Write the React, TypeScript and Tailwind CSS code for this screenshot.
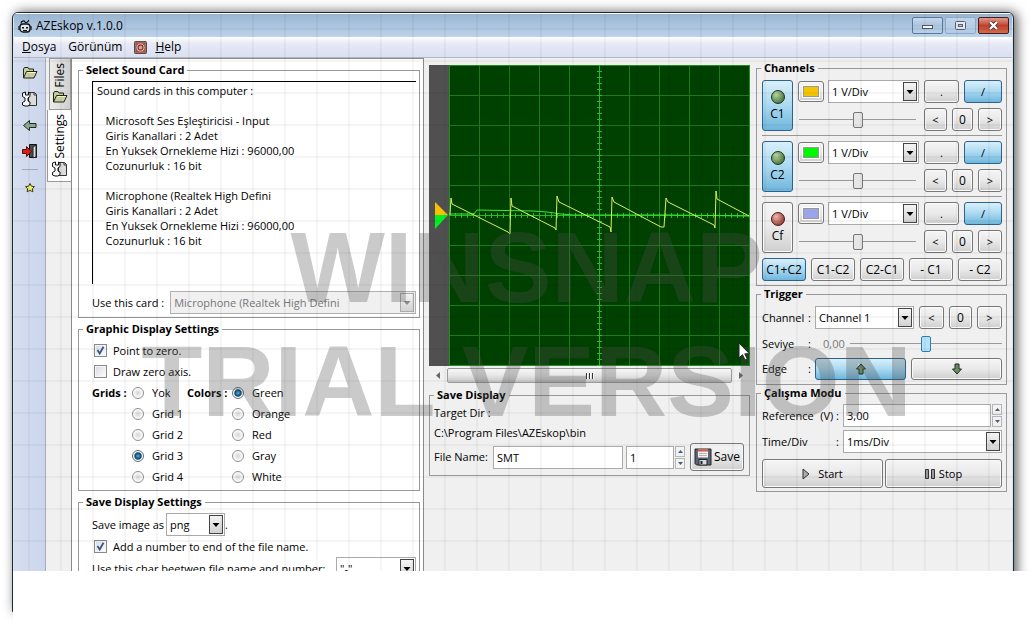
import clsx from "clsx";
import type { ReactNode } from "react";

const soundCards = `Sound cards in this computer :

   Microsoft Ses Eşleştiricisi - Input
   Giris Kanallari : 2 Adet
   En Yuksek Ornekleme Hizi : 96000,00
   Cozunurluk : 16 bit

   Microphone (Realtek High Defini
   Giris Kanallari : 2 Adet
   En Yuksek Ornekleme Hizi : 96000,00
   Cozunurluk : 16 bit`;

const channels = [
  { name: "C1", swatch: "bg-[#f5c400]", on: true },
  { name: "C2", swatch: "bg-[#00f800]", on: true },
  { name: "Cf", swatch: "bg-[#9ba5ea]", on: false },
];

const mathModes = ["C1+C2", "C1-C2", "C2-C1", "- C1", "- C2"];
const grids = ["Yok", "Grid 1", "Grid 2", "Grid 3", "Grid 4"];
const colors = ["Green", "Orange", "Red", "Gray", "White"];

const FolderIcon = () => (
  <svg className="size-4" viewBox="0 0 16 16" aria-hidden="true">
    <path
      d="M1.5 13V4l1-1.5h3.500l1 1.500h4.500V6M1.500 13l3-6.500h10.500l-3 6.500z"
      fill="#c9cf9c"
      stroke="#22261a"
      strokeLinejoin="round"
    />
    <path d="M5.500 7.500h8" stroke="#f3f6d8" />
  </svg>
);

const SetupIcon = () => (
  <svg className="size-4" viewBox="0 0 16 16" aria-hidden="true">
    <path d="M6.500 1.500h6l2 2v11h-8z" fill="#dcdcdc" stroke="#333" />
    <path d="M12 1.500V4h2.500" fill="none" stroke="#333" />
    <path
      d="M.5 2v3.500L3 7v3L.5 11.500V14L3 15h3l2-1.500V11L6 10V7l2-1.500V2L6.500 1v3h-3V1z"
      fill="#f6f6f6"
      stroke="#111"
      strokeLinejoin="round"
    />
  </svg>
);

const BackIcon = () => (
  <svg className="size-4" viewBox="0 0 16 16" aria-hidden="true">
    <path
      d="M1.500 8.500l6-5v3h6.500v4H7.500v3z"
      fill="#8fae94"
      stroke="#1f2b21"
      strokeLinejoin="round"
    />
  </svg>
);

const ExitIcon = () => (
  <svg className="size-4" viewBox="0 0 16 16" aria-hidden="true">
    <path d="M7.500 1.500h7v13h-7z" fill="#4a4a4a" stroke="#111" />
    <path d="M11 4l3-2v12l-3 1z" fill="#d8d8d8" stroke="#222" />
    <path
      d="M.5 6.500h4v-3l5 5-5 5v-3h-4z"
      fill="#d8201a"
      stroke="#5c0d0a"
      strokeLinejoin="round"
    />
  </svg>
);

const StarIcon = () => (
  <svg className="size-4" viewBox="0 0 16 16" aria-hidden="true">
    <path
      d="M8 3.500l1.400 2.700 3.100.4-2.200 2.100.6 3.100L8 10.400l-2.900 1.400.6-3.100-2.200-2.100 3.100-.4z"
      fill="#f3f36a"
      stroke="#3c3c14"
      strokeLinejoin="round"
    />
  </svg>
);

const AppIcon = () => (
  <svg className="size-3.5" viewBox="0 0 14 14" aria-hidden="true">
    <rect x="2" y="5" width="10" height="8" rx="3" fill="#dfe8f1" stroke="#111" strokeWidth="1.300" />
    <path d="M3 4.500C3 2 6 1 7 3s4-1 3.500-2M1 7v4M13 7v4" fill="none" stroke="#111" strokeWidth="1.200" />
    <path d="M4 8h2v1.500H4zM8 8h2v1.500H8zM5 11h4v1H5z" fill="#111" />
  </svg>
);

const HelpIcon = () => (
  <svg className="size-[13px]" viewBox="0 0 14 14" aria-hidden="true">
    <rect x=".5" y=".5" width="13" height="13" rx="1" fill="#8d7a73" stroke="#4b3f3b" />
    <circle cx="7" cy="7" r="4.800" fill="#f1e4e0" stroke="#a4443a" />
    <circle cx="7" cy="7" r="2.700" fill="#b9aeb0" stroke="#9c3226" strokeWidth="1.400" />
    <path d="M2 2l2 2M12 2l-2 2M2 12l2-2M12 12l-2-2" stroke="#c8402e" strokeWidth="1.800" />
  </svg>
);

const EdgeIcon = ({ down }: { down?: boolean }) => (
  <svg className={clsx("size-3", down && "rotate-180")} viewBox="0 0 12 12" aria-hidden="true">
    <path
      d="M6 1l4.500 5H8v5H4V6H1.500z"
      fill="#6f8f66"
      stroke="#1c2a1a"
      strokeLinejoin="round"
    />
  </svg>
);

const FloppyIcon = () => (
  <svg className="size-[18px]" viewBox="0 0 18 18" aria-hidden="true">
    <path d="M1 1h16v16H2.500L1 15.500z" fill="#5b6470" stroke="#23272d" />
    <path d="M4 1.500h10v8H4z" fill="#f2f2f2" />
    <path d="M4 1.500h10v2H4z" fill="#d8573c" />
    <path d="M5 5.500h8M5 7.500h8" stroke="#b5b5b5" />
    <path d="M5 11.500h8V17H5z" fill="#d5d8dc" stroke="#23272d" />
    <path d="M6.500 13h2v3h-2z" fill="#23272d" />
  </svg>
);

type ButtonProps = {
  children: ReactNode;
  pressed?: boolean;
  className?: string;
  label?: string;
};

const Button = ({ children, pressed, className, label }: ButtonProps) => (
  <button
    type="button"
    aria-label={label}
    aria-pressed={pressed}
    className={clsx(
      "flex items-center justify-center rounded-[3px] border bg-linear-to-b",
      pressed
        ? "border-[#2c628b] from-[#d9effa] from-0% via-[#a9d9f1] via-50% to-[#6fb6dc]"
        : "border-[#777] from-[#f5f5f5] via-[#e9e9e9] via-50% to-[#cfcfcf] shadow-[inset_0_0_0_1px_#fafafa]",
      className,
    )}
  >
    {children}
  </button>
);

type GroupProps = {
  title: string;
  className?: string;
  bodyClassName?: string;
  children: ReactNode;
};

const Group = ({ title, className, bodyClassName, children }: GroupProps) => (
  <fieldset className={clsx("min-w-0 border border-[#999]", className)}>
    <legend className="ml-1 px-[3px] text-[11px] leading-4 font-bold">{title}</legend>
    <div className={bodyClassName}>{children}</div>
  </fieldset>
);

type SelectProps = {
  label: string;
  value: string;
  className?: string;
  disabled?: boolean;
};

const Select = ({ label, value, className, disabled }: SelectProps) => (
  <div className={clsx("relative h-[23px] min-w-0", className)}>
    <select
      aria-label={label}
      disabled={disabled}
      className={clsx(
        "block size-full appearance-none border pl-[3px]",
        disabled ? "border-[#b0b0b0] bg-[#f0f0f0] text-[#777]" : "border-[#aaa] bg-white",
      )}
    >
      <option>{value}</option>
    </select>
    <span
      className={clsx(
        "pointer-events-none absolute inset-y-0.5 right-0.5 flex w-3.5 items-center justify-center border bg-linear-to-b from-[#f4f4f4] to-[#d2d2d2]",
        disabled ? "border-[#aaa] text-[#888]" : "border-[#444] text-black",
      )}
    >
      <svg className="h-1 w-2" viewBox="0 0 8 4" aria-hidden="true">
        <path d="M.5 0h7L4 4z" fill="currentColor" />
      </svg>
    </span>
  </div>
);

const Slider = ({ label, hot, className }: { label: string; hot?: boolean; className?: string }) => (
  <input
    type="range"
    aria-label={label}
    defaultValue={50}
    className={clsx(
      "h-4 min-w-0 appearance-none bg-transparent bg-linear-to-b from-[#999] to-[#999] bg-[length:100%_1px] bg-center bg-no-repeat [&::-webkit-slider-thumb]:h-4 [&::-webkit-slider-thumb]:w-2.5 [&::-webkit-slider-thumb]:appearance-none [&::-webkit-slider-thumb]:rounded-[2px] [&::-webkit-slider-thumb]:border",
      hot
        ? "[&::-webkit-slider-thumb]:border-[#2c7fae] [&::-webkit-slider-thumb]:bg-[#b5e2f8]"
        : "[&::-webkit-slider-thumb]:border-[#777] [&::-webkit-slider-thumb]:bg-[#e6e6e6]",
      className,
    )}
  />
);

const Spinner = () => (
  <div className="ml-px flex w-2.5 flex-col gap-px">
    {["Increase", "Decrease"].map((name, i) => (
      <button
        key={name}
        type="button"
        aria-label={name}
        className="flex h-[11px] items-center justify-center border border-[#b5b5b5] bg-[#f2f2f2]"
      >
        <svg className={clsx("h-[3px] w-[5px]", i === 1 && "rotate-180")} viewBox="0 0 5 3" aria-hidden="true">
          <path d="M0 3h5L2.500 0z" fill="#4a5a78" />
        </svg>
      </button>
    ))}
  </div>
);

const CheckBox = ({ label, checked }: { label: string; checked?: boolean }) => (
  <label className="ml-0.5 flex h-[21px] items-center gap-1.5">
    <span className="relative size-[13px]">
      <input
        type="checkbox"
        defaultChecked={checked}
        className="peer block size-full appearance-none border border-[#8a8a8a] bg-linear-to-br from-[#d5d9df] to-white shadow-[inset_0_0_0_1px_#f4f4f4]"
      />
      <svg
        className="pointer-events-none absolute inset-0 hidden peer-checked:block"
        viewBox="0 0 13 13"
        aria-hidden="true"
      >
        <path d="M3.500 6l2.200 3.500L9.500 2.800" fill="none" stroke="#3b5488" strokeWidth="1.800" />
      </svg>
    </span>
    {label}
  </label>
);

const RadioList = ({ name, options, selected }: { name: string; options: string[]; selected: string }) => (
  <div>
    {options.map((option) => (
      <label key={option} className="flex h-[21px] items-center gap-2">
        <input
          type="radio"
          name={name}
          defaultChecked={option === selected}
          className="size-3 appearance-none rounded-full border border-[#8e8f8f] bg-radial from-[#d4d4d4] to-white to-70% checked:border-[#5a7183] checked:from-[#37a0d0] checked:from-10% checked:via-[#103d62] checked:via-45% checked:to-white checked:to-60%"
        />
        {option}
      </label>
    ))}
  </div>
);

const TitleBar = () => (
  <header className="flex h-6 items-center gap-1 border-t border-white bg-linear-to-b from-[#9ab5d2] to-[#bcd3eb] pr-[3px] pl-1">
    <AppIcon />
    <h1 className="grow text-[12px]">AZEskop v.1.0.0</h1>
    <div className="flex gap-0.5">
      <button
        type="button"
        aria-label="Minimize"
        className="flex h-[17px] w-[31px] items-center justify-center rounded-[2px] border border-[#5b7796] bg-linear-to-b from-[#c7d9ec] via-[#a9c3de] via-50% to-[#b9d1ea]"
      >
        <svg className="h-1.5 w-3" viewBox="0 0 12 6" aria-hidden="true">
          <rect x=".5" y="2.500" width="10" height="3" fill="#fff" stroke="#4c5763" />
        </svg>
      </button>
      <button
        type="button"
        aria-label="Maximize"
        className="flex h-[17px] w-[31px] items-center justify-center rounded-[2px] border border-[#8fa9c6] bg-linear-to-b from-[#bfd3e9] to-[#b2cbe5]"
      >
        <svg className="h-[9px] w-[11px]" viewBox="0 0 11 9" aria-hidden="true">
          <rect x=".5" y=".5" width="10" height="8" rx="1" fill="#e4ebf3" stroke="#56616d" />
          <rect x="3.500" y="3.500" width="4" height="2" fill="#b5c8dc" stroke="#56616d" />
        </svg>
      </button>
      <button
        type="button"
        aria-label="Close"
        className="flex h-[17px] w-[31px] items-center justify-center rounded-[2px] border border-[#4a1a16] bg-linear-to-b from-[#dd9a8c] via-[#c0402c] via-50% to-[#d36a4e]"
      >
        <svg className="h-[9px] w-[11px]" viewBox="0 0 11 9" aria-hidden="true">
          <path d="M2 1l7 7M9 1L2 8" stroke="#5b3a3a" strokeWidth="4" />
          <path d="M2 1l7 7M9 1L2 8" stroke="#fff" strokeWidth="2.200" />
        </svg>
      </button>
    </div>
  </header>
);

const MenuBar = () => (
  <nav className="flex h-[21px] items-center border-b border-[#b4b8c4] bg-linear-to-b from-white via-[#e6e9f5] via-35% to-[#dbe0f1] pl-2 text-[12px]">
    <button type="button">
      <u className="underline-offset-1">D</u>osya
    </button>
    <button type="button" className="ml-3">
      Görünüm
    </button>
    <button type="button" className="ml-3 flex items-center gap-2">
      <HelpIcon />
      <span>
        <u className="underline-offset-1">H</u>elp
      </span>
    </button>
  </nav>
);

const ToolBar = () => (
  <div className="flex w-[31px] shrink-0 flex-col items-center gap-2.5 bg-linear-to-r from-[#d6def0] to-[#cbd6ec] pt-[7px] pl-px">
    {[
      { name: "Open", icon: <FolderIcon /> },
      { name: "Setup", icon: <SetupIcon /> },
      { name: "Back", icon: <BackIcon /> },
      { name: "Exit", icon: <ExitIcon /> },
    ].map(({ name, icon }) => (
      <button key={name} type="button" aria-label={name}>
        {icon}
      </button>
    ))}
    <hr className="w-4 border-[#a3a9b6]" />
    <button type="button" aria-label="Favourite">
      <StarIcon />
    </button>
  </div>
);

const SideTabs = () => (
  <div className="flex w-[26px] shrink-0 flex-col items-end border-l border-[#a5adbd] bg-[#f0f0f0] text-[12px]">
    <button
      type="button"
      className="flex h-[52px] w-[22px] flex-col items-center justify-between border border-[#999] bg-linear-to-r from-[#ececec] to-[#cfcfcf] py-1"
    >
      <span className="rotate-180 leading-4 [writing-mode:vertical-rl]">Files</span>
      <FolderIcon />
    </button>
    <button
      type="button"
      className="flex h-[72px] w-6 flex-col items-center justify-between border-b border-l border-[#999] bg-white py-1"
    >
      <span className="rotate-180 leading-4 [writing-mode:vertical-rl]">Settings</span>
      <SetupIcon />
    </button>
  </div>
);

const SettingsPanel = () => (
  <section className="flex w-[353px] shrink-0 flex-col gap-[3px] overflow-hidden border-x border-t border-[#8a8a8a] bg-white pt-[3px] pr-[3px] pl-1.5">
    <Group title="Select Sound Card" bodyClassName="pt-[3px] pr-[3px] pb-[3px] pl-[13px]">
      <pre className="h-[203px] border-t border-l border-black pt-px pl-1 font-[inherit] leading-[15px]">
        {soundCards}
      </pre>
      <div className="mt-[7px] flex items-center gap-1.5">
        <span>Use this card :</span>
        <Select label="Use this card" value="Microphone (Realtek High Defini" className="grow" disabled />
      </div>
    </Group>
    <Group title="Graphic Display Settings" bodyClassName="py-[3px] pl-[13px]">
      <CheckBox label="Point to zero." checked />
      <CheckBox label="Draw zero axis." />
      <div className="flex">
        <b className="w-10 leading-[21px]">Grids :</b>
        <div className="w-[55px]">
          <RadioList name="grid" options={grids} selected="Grid 3" />
        </div>
        <b className="w-[45px] leading-[21px]">Colors :</b>
        <RadioList name="color" options={colors} selected="Green" />
      </div>
    </Group>
    <Group title="Save Display Settings" bodyClassName="py-[3px] pr-[3px] pl-[13px]">
      <div className="flex items-center">
        <span className="w-[74px] whitespace-nowrap">Save image as</span>
        <Select label="Save image as" value="png" className="w-[59px]" />
        <span>.</span>
      </div>
      <CheckBox label="Add a number to end of the file name." checked />
      <div className="flex items-center justify-between">
        <span>Use this char beetwen file name and number:</span>
        <Select label="Separator" value={'"-"'} className="w-20" />
      </div>
    </Group>
  </section>
);

const range = (count: number) => Array.from({ length: count }, (_, i) => i);

const Scope = () => (
  <div className="relative">
    <svg className="block h-[301px] w-full" viewBox="0 0 321 301" preserveAspectRatio="none" role="img" aria-label="Scope">
      <rect width="321" height="301" fill="#004000" />
      <rect width="20" height="301" fill="#505050" />
      <g stroke="#1b7a1b">
        {range(9).map((i) => (
          <path key={i} d={`M${50.5 + i * 30} 0v301`} />
        ))}
        {range(9).map((i) => (
          <path key={i} d={`M20 ${30.5 + i * 30}h301`} />
        ))}
      </g>
      <path d="M20.500 0v301M320.500 0v301M20 .5h301M20 300.500h301" stroke="#1f8f1f" />
      <g stroke="#2cb82c">
        <path d="M170.500 0v301M20 150.500h301" />
        {range(50).map((i) => (
          <path key={i} d={`M168 ${6.5 + i * 6}h5`} />
        ))}
        {range(50).map((i) => (
          <path key={i} d={`M${26.5 + i * 6} 148v5`} />
        ))}
      </g>
      <polyline
        points="20,149 45,149 48,145 104,146 118,147 132,149 144,150 240,150 320,151"
        fill="none"
        stroke="#35e835"
      />
      <polyline
        points="21,150 22,133 23,139 79,167 81,169 82,133 83,141 126,163 127,165 128,131 130,137 181,162 182,167 183,132 185,137 232,162 235,162 237,133 239,137 285,160 286,163 287,126 288,134 320,151"
        fill="none"
        stroke="#d9f060"
      />
      <path d="M6 137l13 13H6z" fill="#f8c000" />
      <path d="M6 150h13L6 164z" fill="#00f020" />
    </svg>
    <svg className="absolute right-0 bottom-[5px] z-10 h-[19px] w-3" viewBox="0 0 12 19" aria-hidden="true">
      <path d="M1 1v15l3.500-3.300L7 18l2.300-1-2.500-5.200H11.500z" fill="#fff" stroke="#222" />
    </svg>
  </div>
);

const ScopeScroll = () => (
  <div className="mt-[2px] flex h-[15px] items-center">
    <button type="button" aria-label="Scroll left" className="flex w-[18px] justify-center">
      <svg className="h-[7px] w-1" viewBox="0 0 4 7" aria-hidden="true">
        <path d="M4 0v7L0 3.500z" fill="#666" />
      </svg>
    </button>
    <div className="flex h-[15px] grow items-center justify-center gap-px rounded-[2px] border border-[#999] bg-linear-to-b from-[#f6f6f6] via-[#e6e6e6] via-50% to-[#c6c6c6]">
      {range(3).map((i) => (
        <span key={i} className="h-1.5 w-0.5 border-l border-[#333] bg-white" />
      ))}
    </div>
    <button type="button" aria-label="Scroll right" className="flex w-[18px] justify-center">
      <svg className="h-[7px] w-1" viewBox="0 0 4 7" aria-hidden="true">
        <path d="M0 0v7l4-3.500z" fill="#666" />
      </svg>
    </button>
  </div>
);

const ScopePanel = () => (
  <main className="min-w-0 grow pt-[7px] pr-1.5 pl-[5px]">
    <Scope />
    <ScopeScroll />
    <Group title="Save Display" className="mt-1" bodyClassName="pr-[5px] pb-1 pl-1">
      <p className="leading-5">Target Dir :</p>
      <p className="leading-5">C:\Program Files\AZEskop\bin</p>
      <div className="flex items-center">
        <label htmlFor="file-name" className="w-[59px] whitespace-nowrap">
          File Name:
        </label>
        <input
          id="file-name"
          defaultValue="SMT"
          className="h-[23px] w-0 grow border border-[#aaa] bg-white px-[3px]"
        />
        <input
          aria-label="File number"
          defaultValue="1"
          className="ml-[3px] h-[23px] w-12 border border-[#aaa] bg-white px-[3px]"
        />
        <Spinner />
        <Button className="ml-[5px] h-7 w-[54px] gap-0.5 text-[12px]">
          <FloppyIcon />
          Save
        </Button>
      </div>
    </Group>
  </main>
);

const Channel = ({ name, swatch, on }: (typeof channels)[number]) => (
  <div className="mb-[5px] flex gap-[5px] border-b border-[#999] pb-1 last:border-b-0 last:pb-0">
    <Button pressed={on} className="w-[31px] shrink-0 flex-col gap-0.5 text-[12px] leading-4">
      <span
        className={clsx(
          "size-3.5 rounded-full border bg-radial-[at_35%_30%]",
          on ? "border-[#1c3517] from-[#b5d6a2] to-[#2c5a22]" : "border-[#4a1611] from-[#efb5a8] to-[#7a2018]",
        )}
      />
      {name}
    </Button>
    <div className="flex min-w-0 grow flex-col gap-[5px]">
      <div className="flex items-center gap-1">
        <Button label={`${name} color`} className="h-[21px] w-[26px] shrink-0">
          <span className={clsx("h-[11px] w-4 border border-[#999] shadow-[0_0_0_1px_#fff]", swatch)} />
        </Button>
        <Select label={`${name} scale`} value="1 V/Div" className="grow" />
      </div>
      <div className="flex h-[23px] items-center pr-[3px] pl-px">
        <Slider label={`${name} offset`} className="w-full" />
      </div>
    </div>
    <div className="flex w-[78px] shrink-0 flex-col gap-[5px]">
      <div className="flex h-[23px] gap-[5px]">
        <Button className="w-[35px]">.</Button>
        <Button pressed className="grow">
          /
        </Button>
      </div>
      <div className="flex h-[23px] gap-[5px]">
        <Button className="w-[23px]">&lt;</Button>
        <Button className="w-[21px] text-[12px]">0</Button>
        <Button className="grow">&gt;</Button>
      </div>
    </div>
  </div>
);

const ControlPanel = () => (
  <aside className="mr-[5px] w-[251px] shrink-0 pt-0.5">
    <Group title="Channels" bodyClassName="pt-1 pr-1 pb-1 pl-[5px]">
      <div>
        {channels.map((channel) => (
          <Channel key={channel.name} {...channel} />
        ))}
      </div>
      <div className="flex h-[23px] gap-[5px] text-[12px]">
        {mathModes.map((mode, i) => (
          <Button key={mode} pressed={i === 0 || undefined} className="flex-1 whitespace-nowrap">
            {mode}
          </Button>
        ))}
      </div>
    </Group>
    <Group title="Trigger" bodyClassName="pt-1 pr-1 pb-1 pl-[5px]">
      <div className="flex h-[23px] gap-[5px]">
        <span className="-mr-[5px] flex w-[53px] items-center justify-between pr-1">
          <span>Channel</span>:
        </span>
        <Select label="Trigger channel" value="Channel 1" className="grow" />
        <Button className="w-[25px]">&lt;</Button>
        <Button className="w-[23px] text-[12px]">0</Button>
        <Button className="w-[25px]">&gt;</Button>
      </div>
      <div className="flex h-[29px] items-center">
        <span className="flex w-[53px] justify-between pr-1">
          <span>Seviye</span>:
        </span>
        <output className="w-[35px] pl-2 text-[#777]">0,00</output>
        <Slider label="Seviye" hot className="w-0 grow" />
      </div>
      <div className="flex h-[22px]">
        <span className="flex w-[53px] items-center justify-between pr-1">
          <span>Edge</span>:
        </span>
        <Button pressed label="Rising edge" className="flex-1">
          <EdgeIcon />
        </Button>
        <Button label="Falling edge" className="ml-[5px] flex-1">
          <EdgeIcon down />
        </Button>
      </div>
    </Group>
    <Group title="Çalışma Modu" bodyClassName="pt-[3px] pr-1 pb-[3px] pl-[5px]">
      <div className="flex items-center">
        <label htmlFor="reference" className="flex w-[81px] justify-between pr-1">
          <span>Reference</span>
          <span>(V) :</span>
        </label>
        <input
          id="reference"
          defaultValue="3,00"
          className="h-[23px] w-0 grow border border-[#aaa] bg-white px-[3px]"
        />
        <Spinner />
      </div>
      <div className="mt-[3px] flex items-center">
        <span className="flex w-[81px] justify-between pr-1">
          <span>Time/Div</span>:
        </span>
        <Select label="Time/Div" value="1ms/Div" className="grow" />
      </div>
      <div className="mt-1.5 flex h-[29px] gap-0.5">
        <Button className="grow gap-2">
          <svg className="h-3 w-2" viewBox="0 0 8 12" aria-hidden="true">
            <path d="M1 1l6 5-6 5z" fill="#aaa" stroke="#333" />
          </svg>
          Start
        </Button>
        <Button className="w-[117px] gap-1">
          <svg className="h-3 w-2.5" viewBox="0 0 10 12" aria-hidden="true">
            <path d="M.5 1.500h3v9h-3zM6.500 1.500h3v9h-3z" fill="#999" stroke="#333" />
          </svg>
          Stop
        </Button>
      </div>
    </Group>
  </aside>
);

const Watermark = () => (
  <div className="pointer-events-none absolute inset-0 overflow-hidden">
    <div className="absolute inset-0 bg-[linear-gradient(to_right,rgba(0,0,0,0.04)_2px,transparent_2px),linear-gradient(to_bottom,rgba(0,0,0,0.04)_2px,transparent_2px)] bg-[size:32px_32px] bg-[position:15px_15px]" />
    <p className="absolute top-[197px] right-0 left-[27px] text-center font-['Liberation_Sans',sans-serif] text-[100px] leading-[114px] font-bold whitespace-nowrap text-[#505050]/30">
      WINSNAP
      <br />
      TRIAL VERSION
    </p>
  </div>
);

export default function App() {
  return (
    <div className="relative flex h-screen overflow-hidden bg-white pt-3 pr-5 pb-5 pl-3 font-['Open_Sans',sans-serif] text-[11px] leading-4 text-black">
      <div className="relative flex min-w-0 grow flex-col overflow-hidden rounded-t-md border border-[#1c2a33] bg-[#d9e6f2] px-px shadow-[3px_0_12px_rgba(0,0,0,0.65)]">
        <TitleBar />
        <MenuBar />
        <div className="flex min-h-0 grow bg-[#f0f0f0]">
          <ToolBar />
          <SideTabs />
          <SettingsPanel />
          <ScopePanel />
          <ControlPanel />
        </div>
        <Watermark />
      </div>
      <div className="absolute right-0 bottom-0 left-[13px] h-[61px] bg-white" />
    </div>
  );
}
